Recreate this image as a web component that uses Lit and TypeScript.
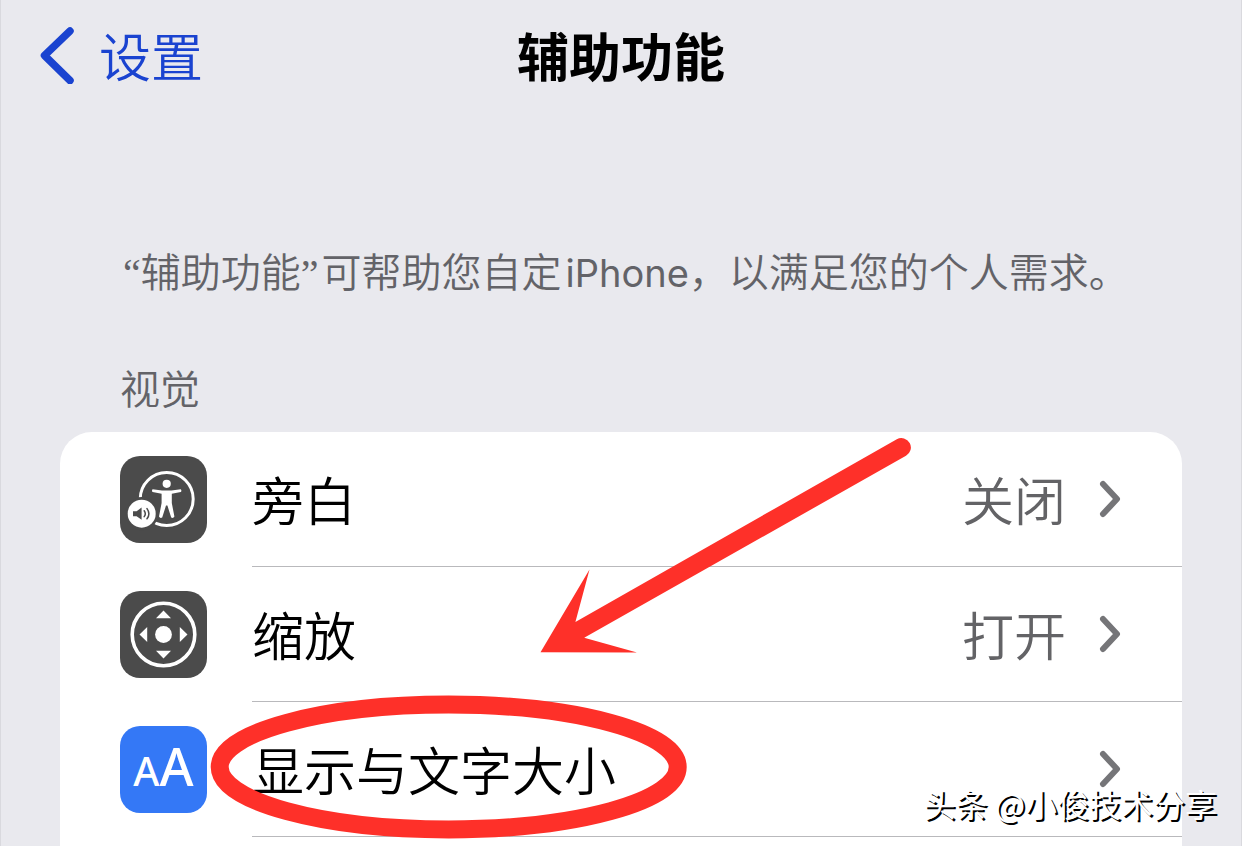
import { LitElement, html, svg, css, nothing } from "lit";
import { customElement, property } from "lit/decorators.js";

const voiceOver = svg`
  <circle cx="46.7" cy="43" r="26.5" fill="none" stroke="#fff" stroke-width="3"/>
  <circle cx="46.7" cy="27.8" r="4.1" fill="#fff"/>
  <path d="M32.6 33.2 L42 34.4 H51.4 L60.8 33.2 Q62 34.8 60.8 36 L51.8 37.8 V47 L54.4 60.6 Q53.4 62.6 51.2 61.6 L47.4 49.6 H46 L42.2 61.6 Q40 62.6 39 60.6 L41.6 47 V37.8 L32.6 36 Q31.4 34.8 32.6 33.2Z" fill="#fff"/>
  <circle cx="21.7" cy="57.7" r="16.6" fill="#4b4b4b"/>
  <circle cx="21.7" cy="57.7" r="14" fill="#fff"/>
  <path d="M13 55.2 H16.6 L21.6 51.6 V63.8 L16.6 60.2 H13Z" fill="#4b4b4b"/>
  <path d="M24.2 54.8 Q26.4 57.7 24.2 60.6 M27 52.6 Q30.8 57.7 27 62.8" fill="none" stroke="#4b4b4b" stroke-width="1.5" stroke-linecap="round"/>`;

const zoomPad = svg`
  <circle cx="43.5" cy="43.5" r="31.3" fill="none" stroke="#fff" stroke-width="3.6"/>
  <circle cx="43.5" cy="43.5" r="8.4" fill="#fff"/>
  <path d="M43.5 19.5 L51 27.2 H36Z M43.5 67.5 L51 59.8 H36Z M19.5 43.5 L27.2 36 V51Z M67.5 43.5 L59.8 36 V51Z" fill="#fff"/>`;

@customElement("settings-row")
class SettingsRow extends LitElement {
  @property() label = "";
  @property() value = "";
  @property() icon = "";

  static styles = css`
    :host { display: block; }
    .row {
      display: flex;
      gap: 45px;
      padding-left: 60px;
      color: #000;
      text-decoration: none;
    }
    .icon {
      align-self: center;
      flex: none;
      width: 87px;
      height: 87px;
      border-radius: 20px;
      background: #4b4b4b;
      overflow: hidden;
    }
    .blue {
      display: flex;
      align-items: baseline;
      justify-content: center;
      background: #3478f6;
      color: #fff;
      font-family: "Noto Sans", sans-serif;
      font-weight: 500;
      line-height: 80px;
    }
    .small { font-size: 40px; }
    .large { font-size: 52px; }
    .icon svg { display: block; }
    .body {
      flex: 1;
      display: flex;
      align-items: center;
      min-height: 134px;
      padding-right: 61px;
      border-bottom: 1px solid #b9b9bc;
      font-size: 52px;
      line-height: 74px;
    }
    .label { flex: 1; }
    .value { color: #636366; margin-right: 33px; }
  `;

  render() {
    return html`<a class="row" href="#">
      ${this.icon === "text"
        ? html`<span class="icon blue" aria-hidden="true"><span class="small">A</span><span class="large">A</span></span>`
        : html`<span class="icon"><svg width="87" height="87" viewBox="0 0 87 87" aria-hidden="true">${this.icon === "voice" ? voiceOver : zoomPad}</svg></span>`}
      <span class="body">
        <span class="label">${this.label}</span>
        ${this.value ? html`<span class="value">${this.value}</span>` : nothing}
        <svg width="22" height="38" viewBox="0 0 22 38" aria-hidden="true">
          <path d="M4 4 L18 19 L4 34" fill="none" stroke="#757578" stroke-width="6" stroke-linecap="round" stroke-linejoin="round"/>
        </svg>
      </span>
    </a>`;
  }
}

@customElement("app-root")
class AppRoot extends LitElement {
  static styles = css`
    :host {
      display: flex;
      flex-direction: column;
      position: relative;
      box-sizing: border-box;
      min-height: 100vh;
      background: #e9e9ee;
      border: solid #d9d9de;
      border-width: 0 1px;
      font-family: "Noto Sans CJK SC", sans-serif;
      font-weight: 350;
    }
    header {
      display: grid;
      grid-template-columns: 1fr auto 1fr;
      align-items: center;
      height: 110px;
      padding: 0 38px;
    }
    .back {
      justify-self: start;
      display: flex;
      align-items: center;
      gap: 24px;
      padding: 0;
      border: 0;
      background: none;
      color: #1a43d0;
      font: inherit;
      font-size: 52px;
      line-height: 74px;
    }
    h1 {
      margin: 0;
      font-size: 52px;
      line-height: 74px;
      font-weight: 700;
    }
    main {
      flex: 1;
      display: flex;
      flex-direction: column;
      padding: 133px 59px 0;
    }
    .intro, h2 {
      margin: 0 60px;
      color: #636368;
      font-size: 40px;
      line-height: 60px;
      font-weight: inherit;
    }
    .intro {
      margin-right: 30px;
      font-family: "Liberation Serif", "Noto Sans CJK SC", sans-serif;
    }
    .quoted { margin: 0 3px; }
    .latin {
      margin-left: 4px;
      font-family: Inter, sans-serif;
      font-size: 38px;
      font-weight: 400;
    }
    h2 { margin-top: 53px; margin-bottom: 15px; }
    .card {
      flex: 1;
      position: relative;
      border-radius: 32px 32px 0 0;
      background: #fff;
    }
    ul { margin: 0; padding: 0; list-style: none; }
    .marks {
      position: absolute;
      left: 0;
      top: 0;
      overflow: visible;
      pointer-events: none;
    }
    .credit {
      position: absolute;
      right: 24px;
      bottom: 19px;
      color: #fff;
      font-size: 32px;
      line-height: 48px;
      font-weight: 400;
      text-shadow: 2px 2px 0 #000;
      white-space: nowrap;
    }
  `;

  render() {
    return html`
      <header>
        <button class="back">
          <svg width="36" height="58" viewBox="0 0 36 58" aria-hidden="true">
            <path d="M31 5 L5.500 29.500 L31 54.500" fill="none" stroke="#1a43d0" stroke-width="7.500" stroke-linecap="round" stroke-linejoin="round"/>
          </svg>
          <span>设置</span>
        </button>
        <h1>辅助功能</h1>
      </header>
      <main>
        <p class="intro"><span class="quoted">“辅助功能”</span>可帮助您自定<span class="latin">iPhone</span>，以满足您的个人需求。</p>
        <h2>视觉</h2>
        <div class="card">
          <ul>
            <li><settings-row icon="voice" label="旁白" value="关闭"></settings-row></li>
            <li><settings-row icon="zoom" label="缩放" value="打开"></settings-row></li>
            <li><settings-row icon="text" label="显示与文字大小"></settings-row></li>
          </ul>
          <svg class="marks" width="860" height="410" viewBox="0 0 860 410" aria-hidden="true">
            <path d="M480.500 220.300 L529.500 137.600 L515.400 190 L836.800 7.200 A9.400 9.400 0 0 1 846 23.800 L524.200 205.700 L577 220.500Z" fill="#fe3029"/>
            <ellipse cx="388.700" cy="335" rx="229" ry="62.400" fill="none" stroke="#fe3029" stroke-width="18"/>
          </svg>
        </div>
      </main>
      <div class="credit">头条 @小俊技术分享</div>
    `;
  }
}
